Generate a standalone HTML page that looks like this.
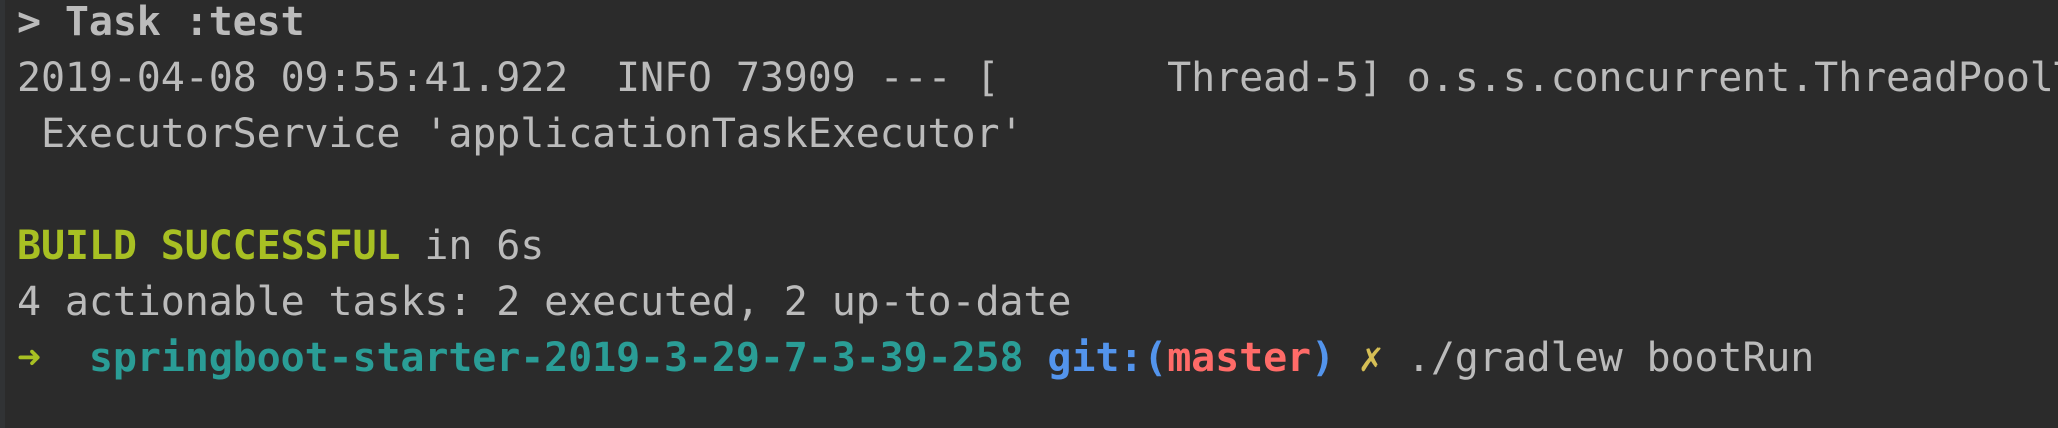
<!DOCTYPE html>
<html><head><meta charset="utf-8"><style>
html,body{margin:0;padding:0;}
body{width:2058px;height:428px;background:#2b2b2b;overflow:hidden;position:relative;}
.bar{position:absolute;left:0;top:0;width:5px;height:428px;background:#313335;}
pre{position:absolute;left:17px;top:-6px;width:2041px;overflow:hidden;margin:0;font-family:"DejaVu Sans Mono","Liberation Mono",monospace;font-size:40px;line-height:56px;letter-spacing:-0.12px;color:#bbbbbb;white-space:pre;}
b{font-weight:bold;}
.g{color:#a8c023;font-weight:bold;}
.t{color:#2a9d96;font-weight:bold;}
.bl{color:#5394ec;font-weight:bold;}
.r{color:#ff6b68;font-weight:bold;}
.y{color:#d6bf55;}
.ar{color:#a8c023;}
</style></head><body><div class="bar"></div><pre><b>&gt; Task :test</b>
2019-04-08 09:55:41.922  INFO 73909 --- [       Thread-5] o.s.s.concurrent.ThreadPoolTaskExecutor
 ExecutorService 'applicationTaskExecutor'

<span class="g">BUILD SUCCESSFUL</span> in 6s
4 actionable tasks: 2 executed, 2 up-to-date
<span class="ar">➜</span>  <span class="t">springboot-starter-2019-3-29-7-3-39-258</span> <span class="bl">git:(</span><span class="r">master</span><span class="bl">)</span> <span class="y">✗</span> ./gradlew bootRun</pre></body></html>
